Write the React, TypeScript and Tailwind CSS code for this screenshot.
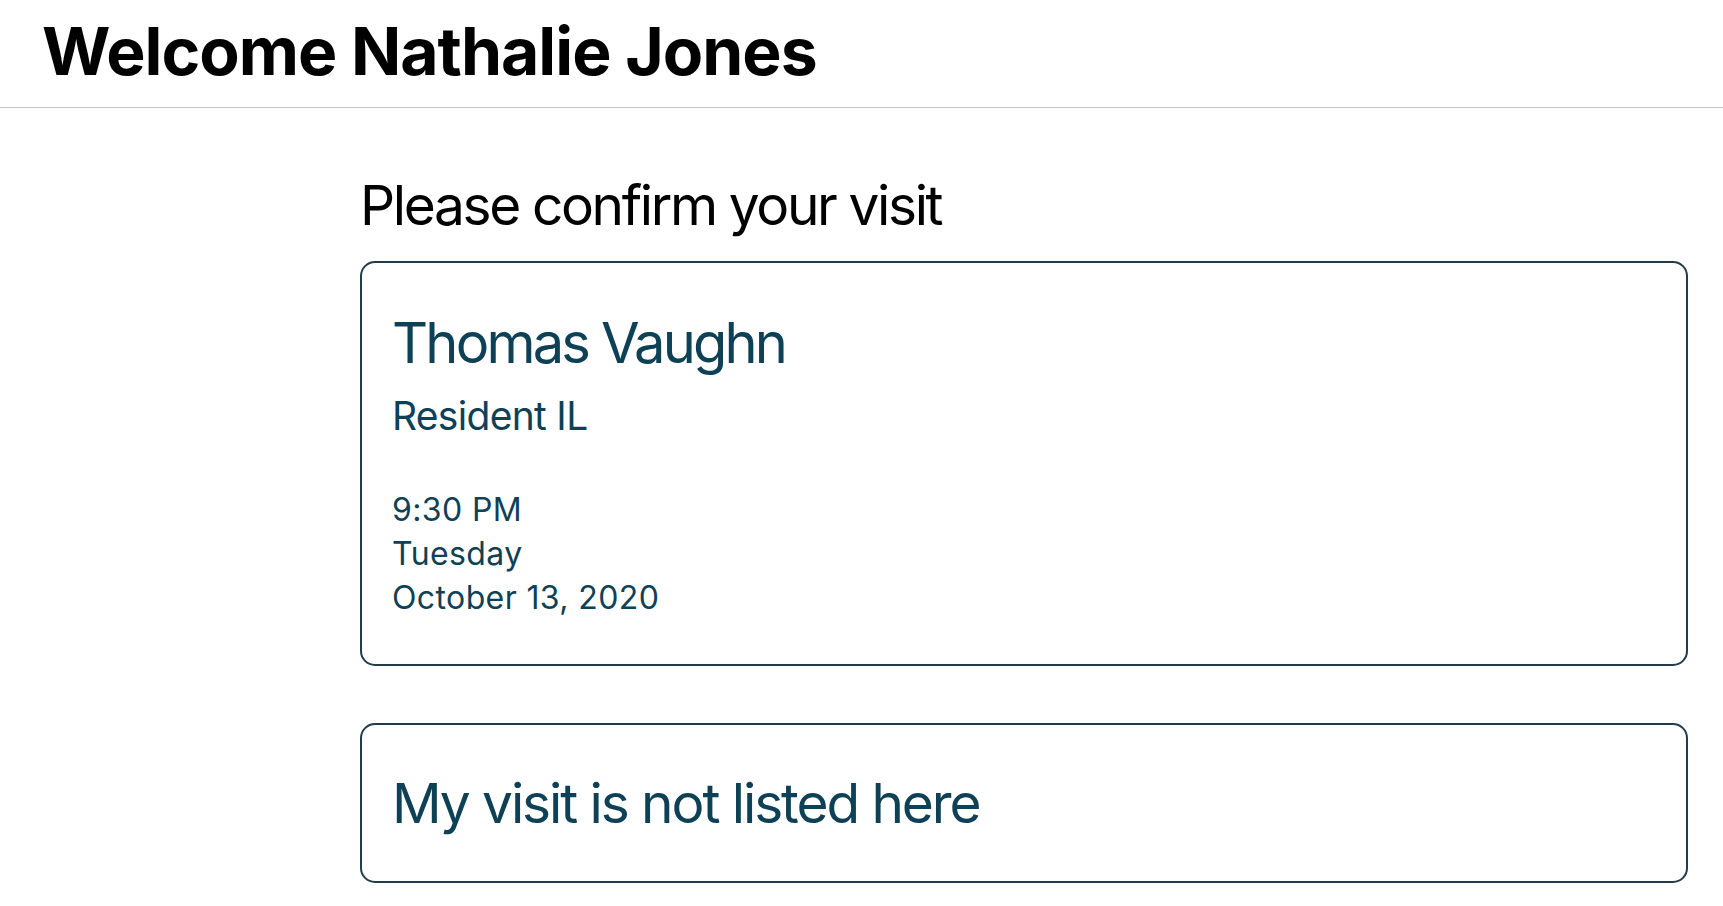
export default function App() {
  return (
    <div className="min-h-screen w-full bg-white font-['Inter','Noto_Sans',sans-serif]">
      <header className="h-[108px] border-b border-[#c4c4c4] pl-[42px] pt-[11px]">
        <h1 className="text-[66px] leading-[80px] font-bold tracking-[-0.015em] text-black">Welcome Nathalie Jones</h1>
      </header>

      <main className="ml-[360px] mr-[35px] pt-[65px]">
        <h2 className="text-[55px] leading-[64px] text-black tracking-[-0.043em]">Please confirm your visit</h2>

        <div className="mt-[24px] rounded-[15px] border-2 border-[#223d4a] px-[30px] pt-[48px] pb-[44px] text-[#0e4156]">
          <p className="text-[56px] leading-[64px] tracking-[-0.05em]">Thomas Vaughn</p>
          <p className="mt-[17px] text-[39px] leading-[48px] tracking-[-0.018em]">Resident IL</p>
          <div className="mt-[48px] text-[32px] leading-[44px] tracking-[0.012em]">
            <p>9:30 PM</p>
            <p>Tuesday</p>
            <p>October 13, 2020</p>
          </div>
        </div>

        <div className="mt-[57px] rounded-[15px] border-2 border-[#223d4a] px-[30px] py-[46px] text-[#0e4156]">
          <p className="text-[55px] leading-[64px] tracking-[-0.038em]">My visit is not listed here</p>
        </div>
      </main>
    </div>
  )
}
